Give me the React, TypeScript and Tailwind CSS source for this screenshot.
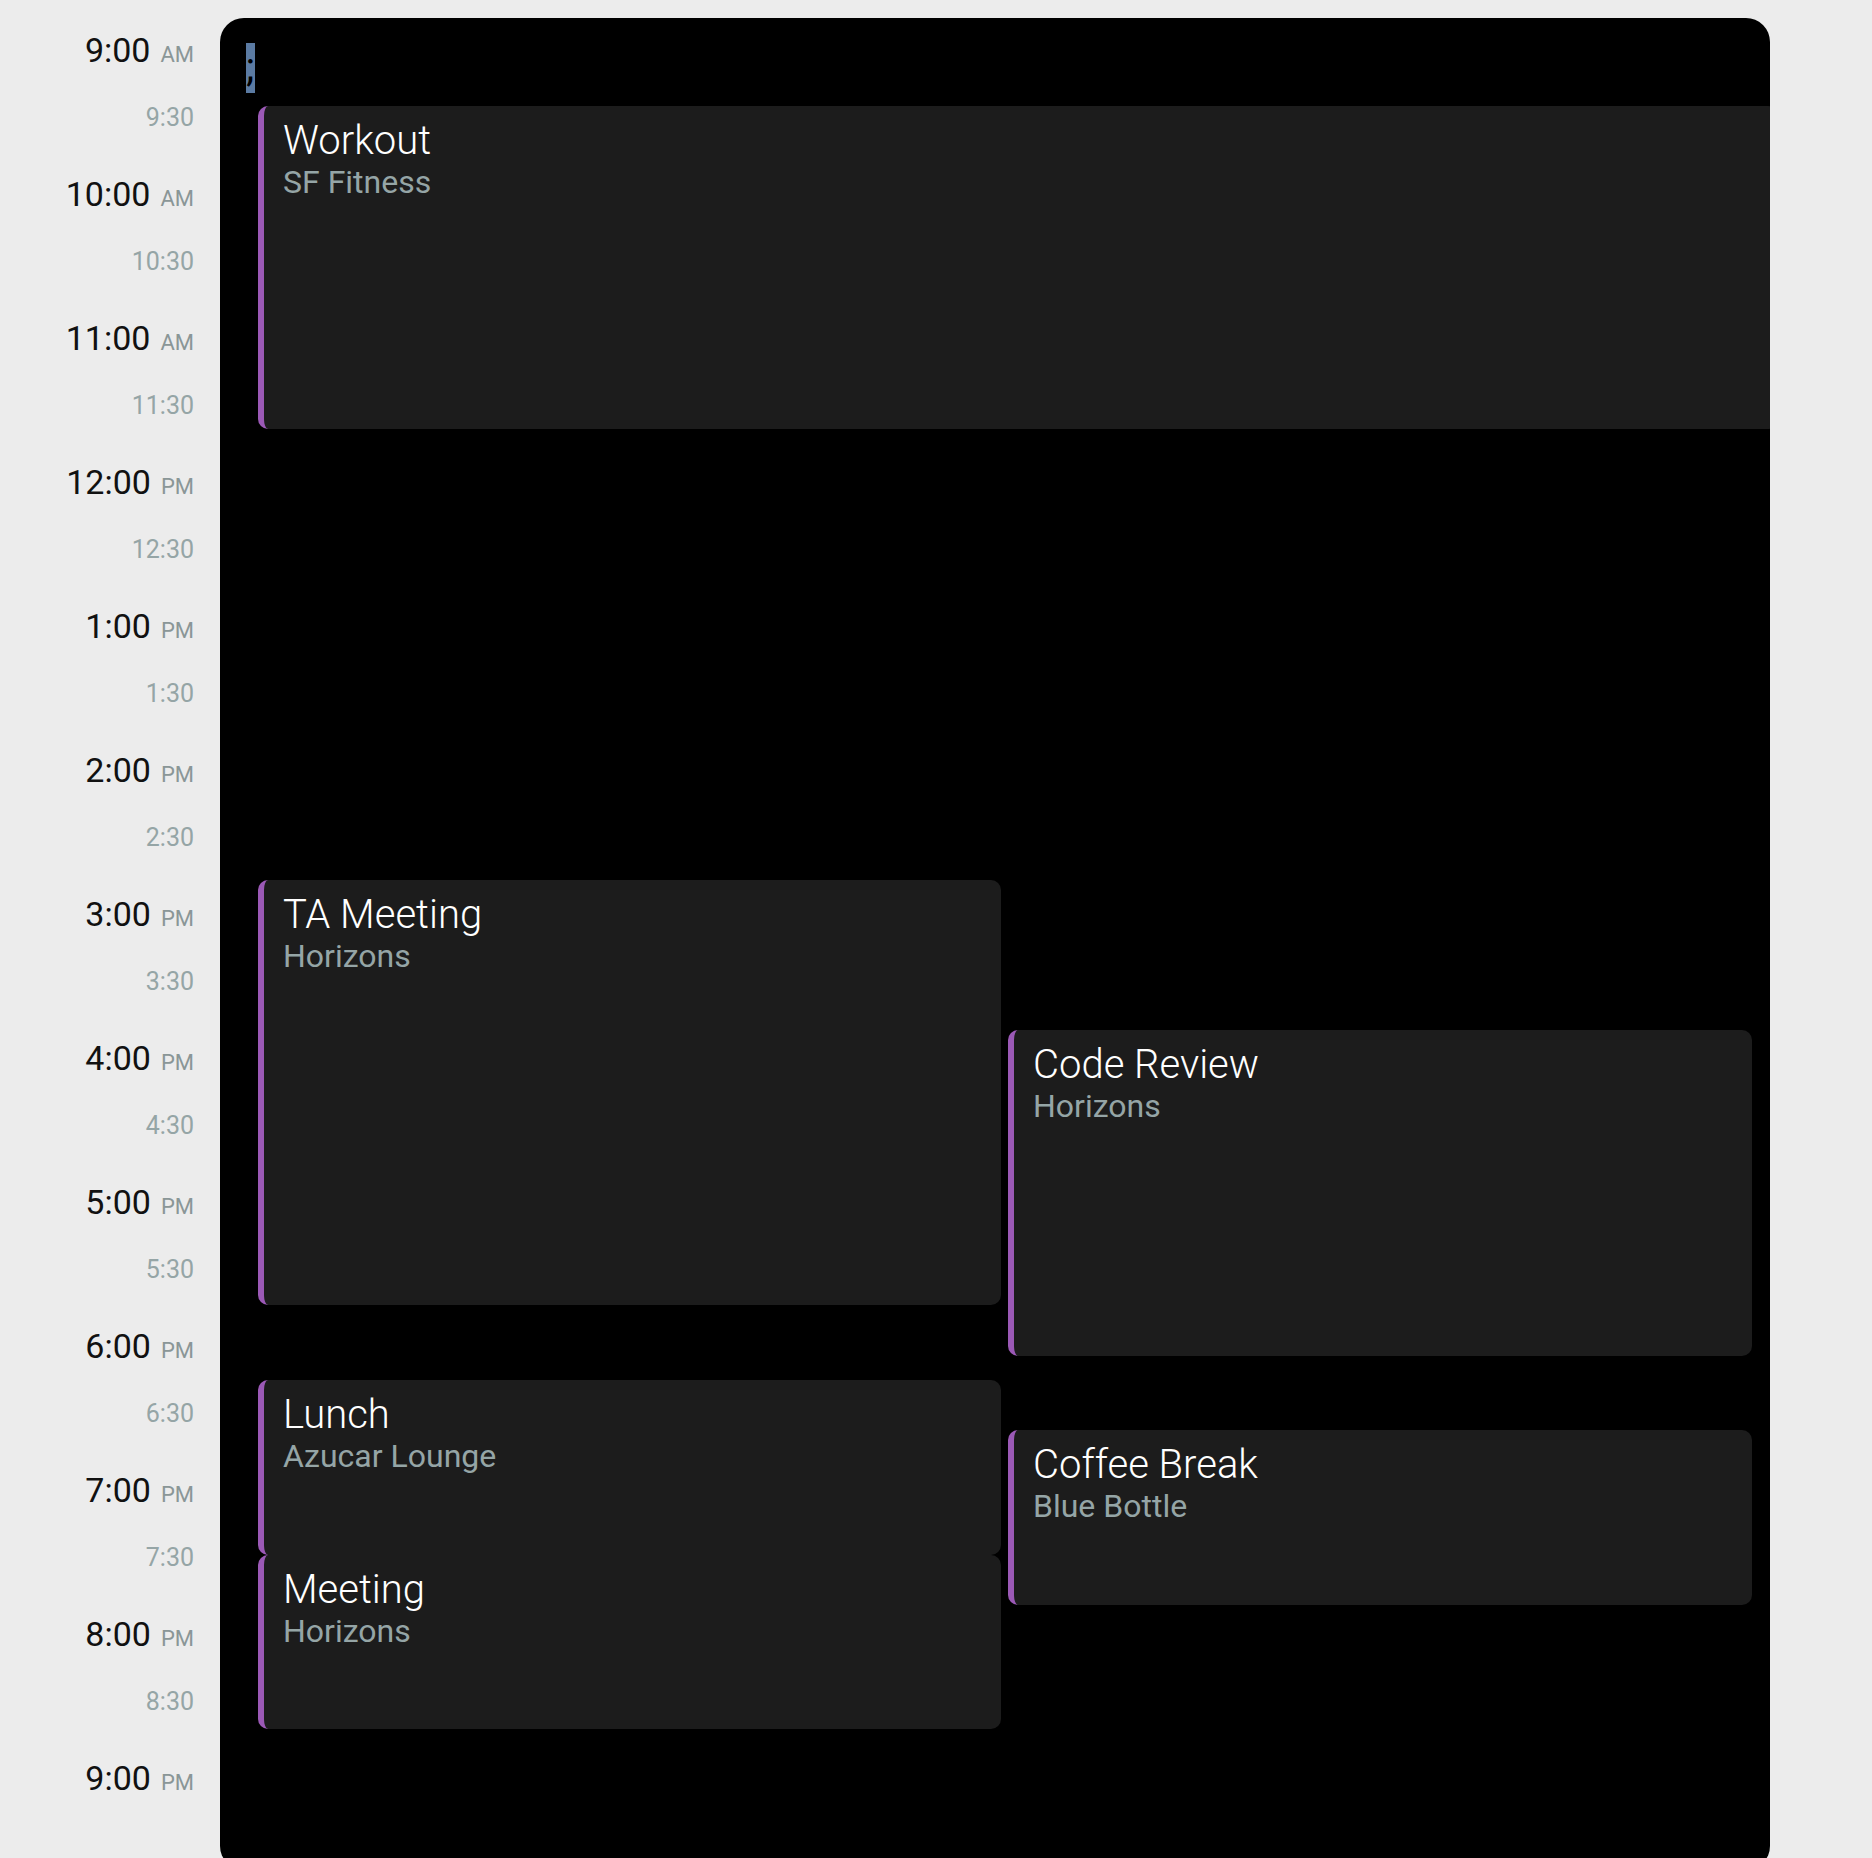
import React from "react";

type Slot = { time: string; suffix?: string };

const slots: Slot[] = [
  { time: "9:00", suffix: "AM" },
  { time: "9:30" },
  { time: "10:00", suffix: "AM" },
  { time: "10:30" },
  { time: "11:00", suffix: "AM" },
  { time: "11:30" },
  { time: "12:00", suffix: "PM" },
  { time: "12:30" },
  { time: "1:00", suffix: "PM" },
  { time: "1:30" },
  { time: "2:00", suffix: "PM" },
  { time: "2:30" },
  { time: "3:00", suffix: "PM" },
  { time: "3:30" },
  { time: "4:00", suffix: "PM" },
  { time: "4:30" },
  { time: "5:00", suffix: "PM" },
  { time: "5:30" },
  { time: "6:00", suffix: "PM" },
  { time: "6:30" },
  { time: "7:00", suffix: "PM" },
  { time: "7:30" },
  { time: "8:00", suffix: "PM" },
  { time: "8:30" },
  { time: "9:00", suffix: "PM" },
];

const events = [
  { title: "Workout", place: "SF Fitness", top: 88, height: 323, left: 38, width: 1520 },
  { title: "TA Meeting", place: "Horizons", top: 862, height: 425, left: 38, width: 743 },
  { title: "Code Review", place: "Horizons", top: 1012, height: 326, left: 788, width: 744 },
  { title: "Lunch", place: "Azucar Lounge", top: 1362, height: 175, left: 38, width: 743 },
  { title: "Meeting", place: "Horizons", top: 1537, height: 174, left: 38, width: 743 },
  { title: "Coffee Break", place: "Blue Bottle", top: 1412, height: 175, left: 788, width: 744 },
];

function TimeLabel({ slot }: { slot: Slot }) {
  if (slot.suffix) {
    return (
      <div className="h-[72px] text-right text-[34px] text-[#111] leading-[1.172]">
        {slot.time}
        <span className="ml-[10px] text-[22px] text-[#8a9697]">{slot.suffix}</span>
      </div>
    );
  }
  return (
    <div className="h-[72px] text-right text-[25px] text-[#95a5a6] leading-[1.172]">
      {slot.time}
    </div>
  );
}

export default function App() {
  return (
    <div
      className="min-h-screen bg-[#ececec] flex pt-[18px]"
      style={{ fontFamily: "Roboto, 'Open Sans', sans-serif" }}
    >
      {/* TIME COLUMN */}
      <div className="w-[220px] shrink-0 pt-[13px] pr-[26px]">
        {slots.map((slot, i) => (
          <TimeLabel key={i} slot={slot} />
        ))}
      </div>

      {/* DAY PANEL */}
      <div className="relative w-[1550px] h-[1852px] bg-black rounded-3xl overflow-hidden">
        <span className="absolute left-[26px] top-[25px] h-[50px] w-[9px] bg-[#5b7ba3] text-black text-[40px] leading-[50px] overflow-hidden">
          ;
        </span>

        {events.map((ev, i) => (
          <div
            key={i}
            className="absolute bg-[#1c1c1c] border-l-[6px] border-[#9b59b6] rounded-[10px] pl-[19px] pt-[12px]"
            style={{ top: ev.top, height: ev.height, left: ev.left, width: ev.width }}
          >
            <div className="text-[40px] font-light text-white leading-[1.172]">{ev.title}</div>
            <div className="text-[32px] text-[#95a5a6] leading-[1.1]">{ev.place}</div>
          </div>
        ))}
      </div>
    </div>
  );
}
